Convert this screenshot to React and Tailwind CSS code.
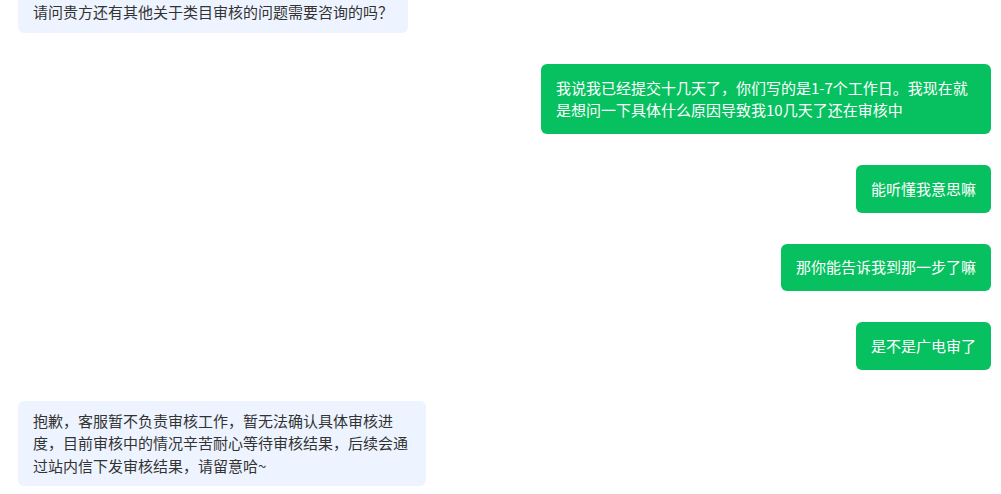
export default function App() {
  const font = { fontFamily: '"Noto Sans CJK SC", "Noto Sans", sans-serif' };
  const left = "self-start max-w-[408px] rounded-[6px] bg-[#edf4ff] px-[15px] py-[9px] text-[15px] leading-[22.5px] text-[#333333]";
  const right = "self-end max-w-[450px] rounded-[6px] bg-[#07c160] px-[15px] py-[12.5px] text-[15px] leading-[22.5px] text-white";
  return (
    <div className="h-[494px] w-full overflow-hidden bg-white" style={font}>
      <div className="mt-[-8px] flex flex-col gap-[31px] pl-[18px] pr-[10px]">
        <div className={left}>请问贵方还有其他关于类目审核的问题需要咨询的吗？</div>
        <div className={`${right} mt-[0.5px]`}>我说我已经提交十几天了，你们写的是1-7个工作日。我现在就是想问一下具体什么原因导致我10几天了还在审核中</div>
        <div className={right}>能听懂我意思嘛</div>
        <div className={right}>那你能告诉我到那一步了嘛</div>
        <div className={right}>是不是广电审了</div>
        <div className={left}>抱歉，客服暂不负责审核工作，暂无法确认具体审核进度，目前审核中的情况辛苦耐心等待审核结果，后续会通过站内信下发审核结果，请留意哈~</div>
      </div>
    </div>
  );
}
